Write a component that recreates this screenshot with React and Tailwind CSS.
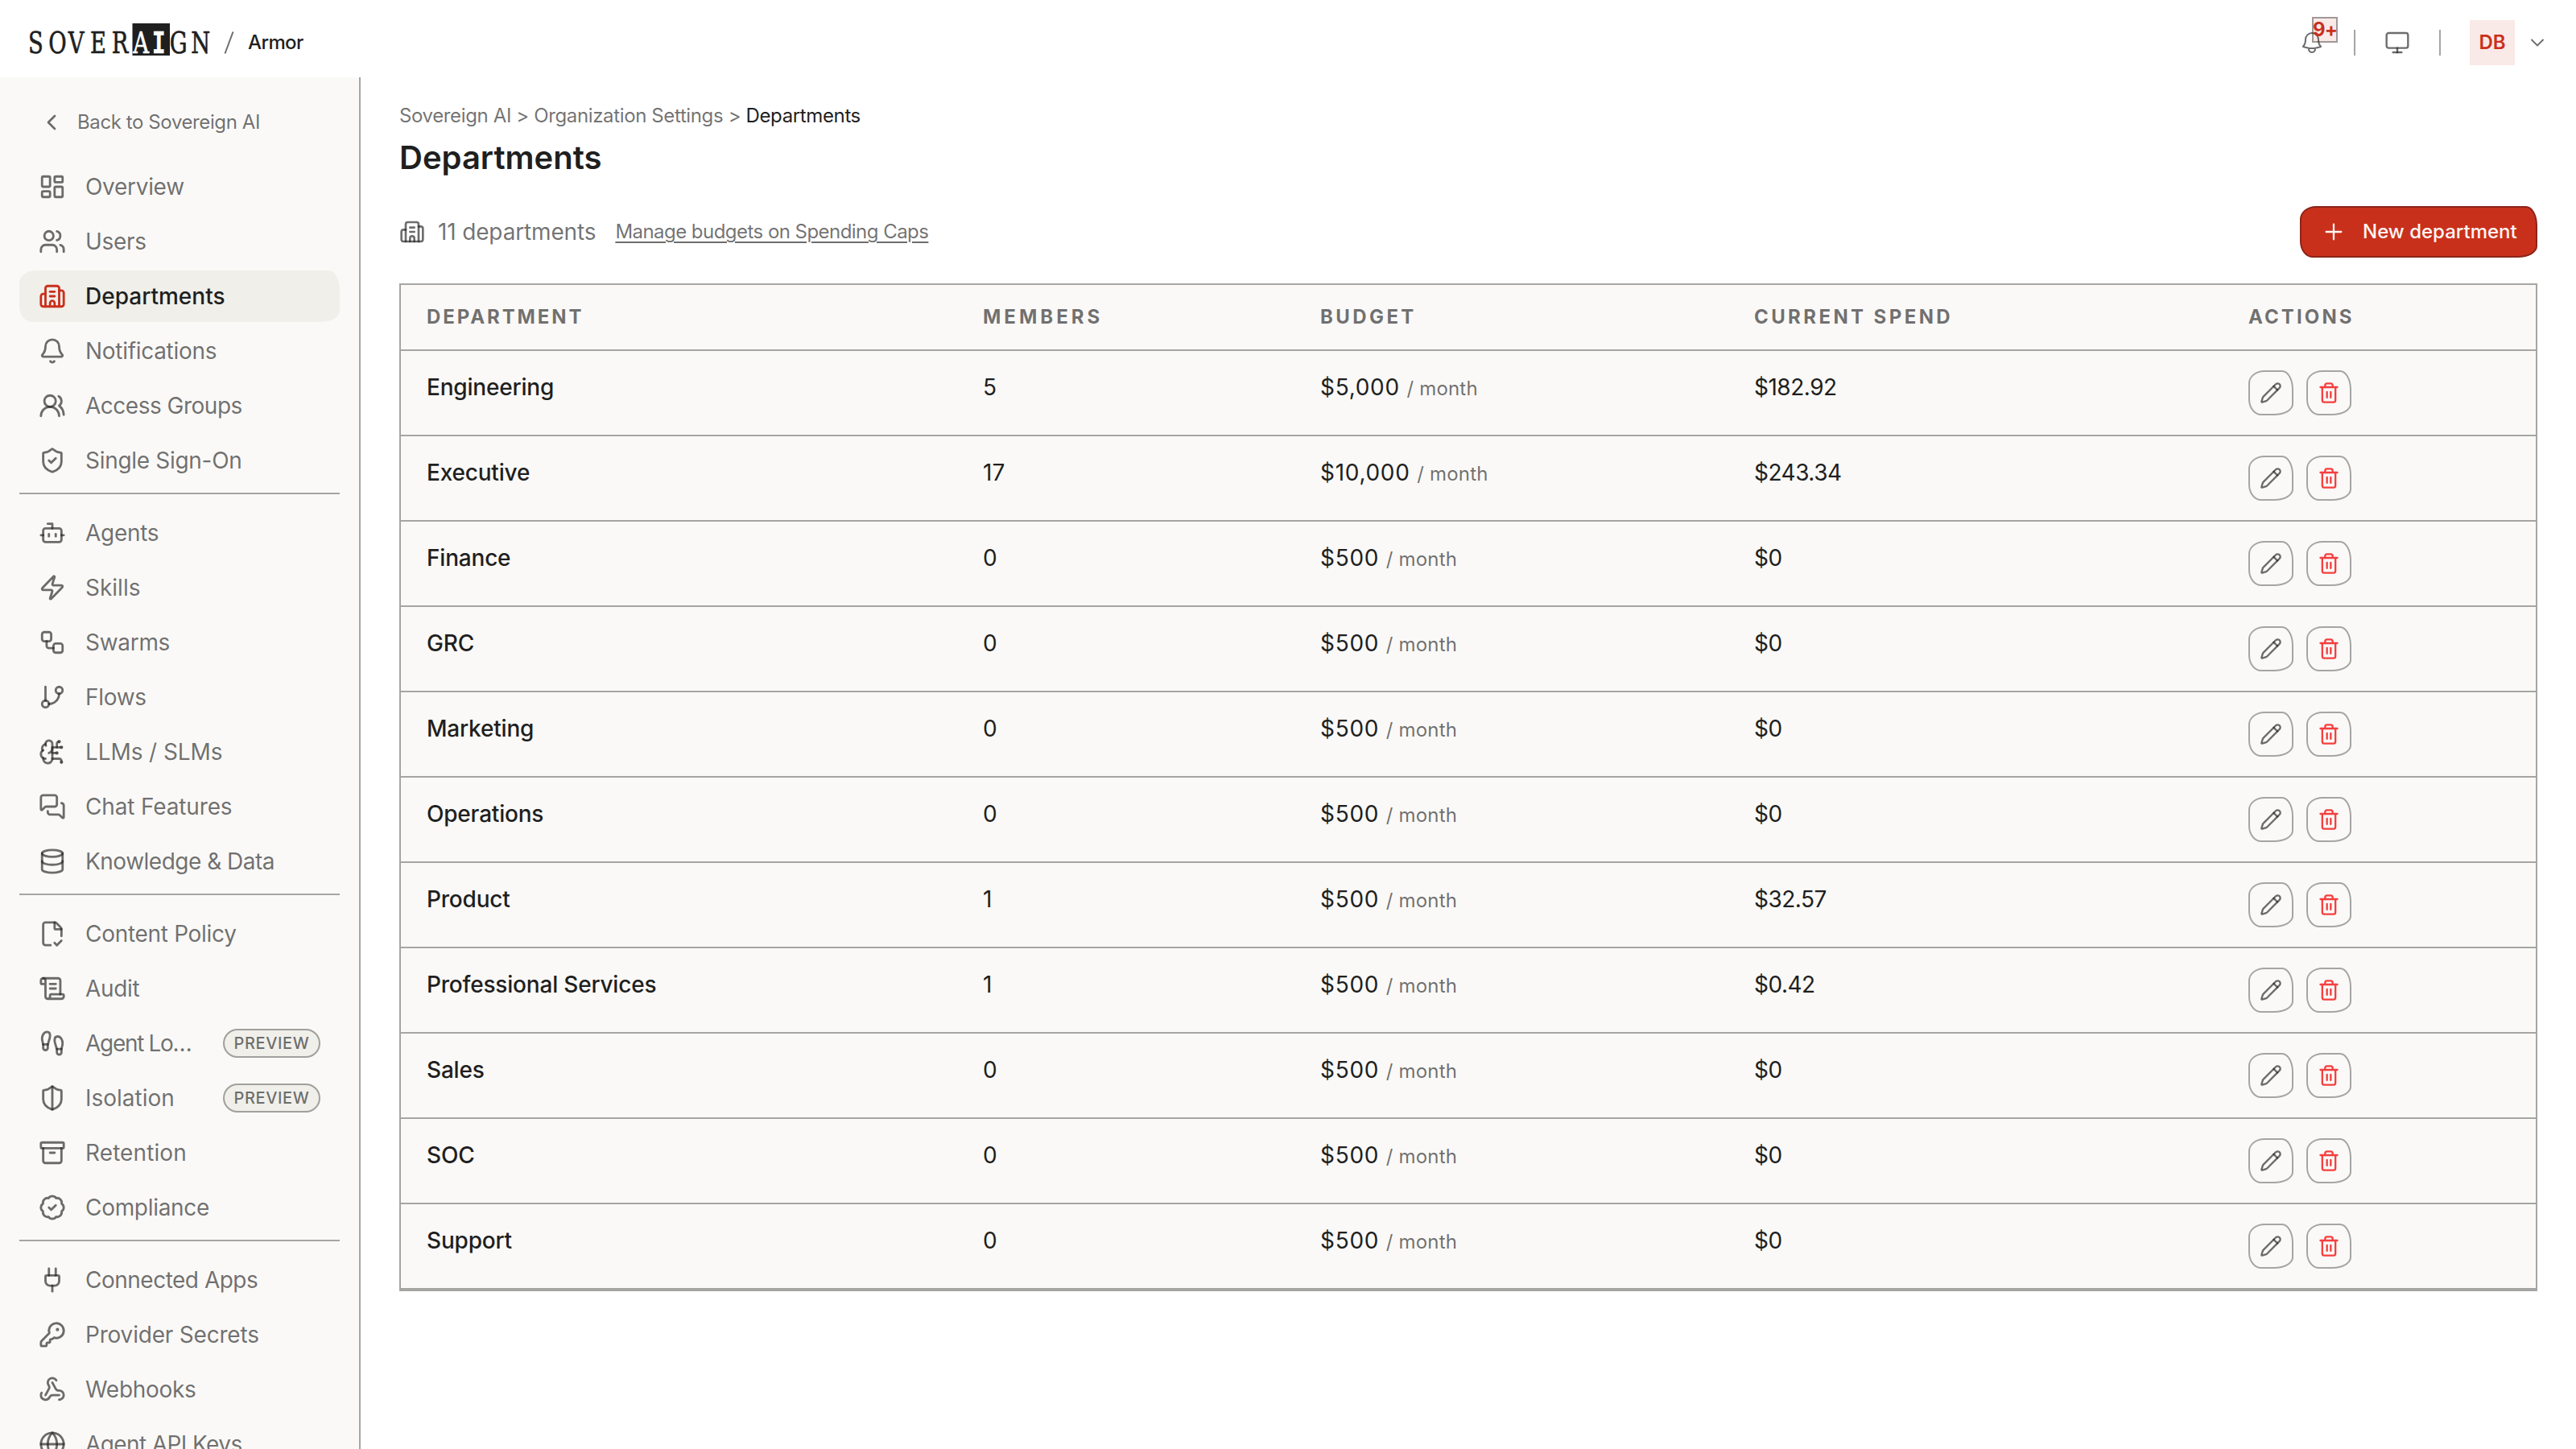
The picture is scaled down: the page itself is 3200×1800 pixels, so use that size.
import {
  Archive,
  BadgeCheck,
  Bell,
  Bot,
  BrainCircuit,
  Building2,
  ChevronDown,
  ChevronLeft,
  Database,
  FileCheck2,
  Footprints,
  GitBranch,
  Globe,
  KeyRound,
  LayoutDashboard,
  MessagesSquare,
  Monitor,
  Pencil,
  Plug,
  Plus,
  ScrollText,
  ShieldCheck,
  ShieldHalf,
  Trash2,
  Users,
  UsersRound,
  Webhook,
  Workflow,
  Zap,
} from 'lucide-react';
import { HiOutlineBell } from 'react-icons/hi2';

const navGroups = [
  [
    { label: 'Overview', icon: LayoutDashboard },
    { label: 'Users', icon: Users },
    { label: 'Departments', icon: Building2, active: true },
    { label: 'Notifications', icon: Bell },
    { label: 'Access Groups', icon: UsersRound, tracking: 'tracking-[-0.5px]' },
    { label: 'Single Sign-On', icon: ShieldCheck },
  ],
  [
    { label: 'Agents', icon: Bot },
    { label: 'Skills', icon: Zap, tracking: 'tracking-normal' },
    { label: 'Swarms', icon: Workflow },
    { label: 'Flows', icon: GitBranch },
    { label: 'LLMs / SLMs', icon: BrainCircuit, tracking: 'tracking-[-0.1px]' },
    { label: 'Chat Features', icon: MessagesSquare, tracking: 'tracking-[-0.15px]' },
    { label: 'Knowledge & Data', icon: Database, tracking: 'tracking-[-0.5px]' },
  ],
  [
    { label: 'Content Policy', icon: FileCheck2 },
    { label: 'Audit', icon: ScrollText },
    { label: 'Agent Lo…', icon: Footprints, preview: true, tracking: 'tracking-[-1.3px]' },
    { label: 'Isolation', icon: ShieldHalf, preview: true, tracking: 'tracking-normal' },
    { label: 'Retention', icon: Archive, tracking: 'tracking-[0.1px]' },
    { label: 'Compliance', icon: BadgeCheck },
  ],
  [
    { label: 'Connected Apps', icon: Plug, tracking: 'tracking-[-0.5px]' },
    { label: 'Provider Secrets', icon: KeyRound, tracking: 'tracking-[-0.2px]' },
    { label: 'Webhooks', icon: Webhook },
    { label: 'Agent API Keys', icon: Globe, tracking: 'tracking-[-0.6px]' },
  ],
];

const departments = [
  { name: 'Engineering', members: 5, budget: '$5,000', spend: '$182.92' },
  { name: 'Executive', members: 17, budget: '$10,000', spend: '$243.34' },
  { name: 'Finance', members: 0, budget: '$500', spend: '$0' },
  { name: 'GRC', members: 0, budget: '$500', spend: '$0' },
  { name: 'Marketing', members: 0, budget: '$500', spend: '$0' },
  { name: 'Operations', members: 0, budget: '$500', spend: '$0' },
  { name: 'Product', members: 1, budget: '$500', spend: '$32.57' },
  { name: 'Professional Services', members: 1, budget: '$500', spend: '$0.42' },
  { name: 'Sales', members: 0, budget: '$500', spend: '$0' },
  { name: 'SOC', members: 0, budget: '$500', spend: '$0' },
  { name: 'Support', members: 0, budget: '$500', spend: '$0' },
];

const columns = 'grid grid-cols-[691px_419px_539px_614px_1fr] pl-8';

// Slightly uneven corners, shared by buttons and the active nav item
const sketchy = 'rounded-[20px_14px_24px_16px/16px_24px_14px_20px]';

const Logo = () => (
  <svg width="228" height="44" viewBox="0 0 228 44" className="overflow-visible" aria-label="SOVERAIGN">
    <rect x="129.5" y="2" width="46.5" height="40" fill="#1f1f1f" />
    <text
      transform="scale(0.72 1)"
      y="39"
      x="0 35 69 107 144 181 214 244 281"
      fontFamily="'DejaVu Serif', serif"
      fontSize="38"
      fill="#1f1f1f"
      stroke="#1f1f1f"
      strokeWidth="0.7"
    >
      SOVER
      <tspan fill="#ffffff" stroke="#ffffff">A</tspan>
      <tspan fill="#ffffff" stroke="#ffffff" fontFamily="'DejaVu Sans Mono', monospace" fontWeight="700">I</tspan>
      GN
    </text>
  </svg>
);

const Header = () => (
  <header className="flex h-24 shrink-0 items-center justify-between bg-white pt-2.5 pr-[34px] pl-[35px]">
    <div className="flex items-center">
      <div className="-mt-2"><Logo /></div>
      <svg width="14" height="30" viewBox="0 0 14 30" className="ml-[15px]">
        <path d="M1.5 28.5 11.5 1.5" stroke="#1f1f1fa6" strokeWidth="2" />
      </svg>
      <span className="ml-4 text-[24px] font-medium tracking-[-0.6px] text-[#1f1f1f]">Armor</span>
    </div>

    <div className="flex items-center">
      <div className="relative text-[#1f1f1fa6]">
        <HiOutlineBell className="size-8" />
        <span className="absolute -top-4 left-4 flex size-8 items-center justify-center border-2 border-[#1f1f1f66] bg-[#c9301c1a] text-[24px] font-bold tracking-[-1px] text-[#c9301c]">
          9+
        </span>
      </div>
      <div className="ml-9 h-8 w-0.5 bg-[#a5a5a3]" />
      <Monitor className="ml-9 size-8 text-[#1f1f1fa6]" strokeWidth={1.8} />
      <div className="ml-9 h-8 w-0.5 bg-[#a5a5a3]" />
      <div className="ml-9 flex size-14 items-center justify-center bg-[#f9e9e7] text-[24px] font-semibold text-[#c9301c]">
        DB
      </div>
      <ChevronDown className="ml-3.5 size-7 text-[#1f1f1fa6]" strokeWidth={1.6} />
    </div>
  </header>
);

const NavItem = ({ label, icon: Icon, active, preview, tracking = 'tracking-[-0.3px]' }) => (
  <div
    className={`flex h-16 shrink-0 items-center px-6 ${sketchy} ${
      active ? 'bg-[#f0efea] font-medium text-[#1f1f1f]' : 'text-[#1f1f1fa6]'
    }`}
  >
    <Icon className={`size-[34px] shrink-0 ${active ? 'text-[#c9301c]' : ''}`} />
    <span className={`ml-6 text-[28px] leading-[42px] whitespace-nowrap ${active ? '' : tracking}`}>
      {label}
    </span>
    {preview && (
      <span className="ml-auto flex h-9 w-[121px] items-center justify-center rounded-full border-2 border-[#a0a09c] bg-[#f0efea] text-[20px] font-medium tracking-[0.6px]">
        PREVIEW
      </span>
    )}
  </div>
);

const Sidebar = () => (
  <aside className="flex w-[448px] shrink-0 flex-col overflow-hidden border-r-2 border-[#a5a5a3] bg-[#faf9f7] px-6 pt-6">
    <div className="mb-4 flex h-16 shrink-0 items-center gap-4 pl-6 text-[24px] tracking-[-0.4px] text-[#1f1f1fa6]">
      <ChevronLeft className="size-8" />
      Back to Sovereign AI
    </div>
    {navGroups.map((group, i) => (
      <div
        key={i}
        className={`flex shrink-0 flex-col gap-1 ${i > 0 ? 'mt-2 border-t-2 border-[#a5a5a3] pt-4' : ''}`}
      >
        {group.map((item) => <NavItem key={item.label} {...item} />)}
      </div>
    ))}
  </aside>
);

const ActionButton = ({ icon: Icon, className }) => (
  <button className={`flex size-14 items-center justify-center border-2 border-[#a5a5a3] ${sketchy} ${className}`}>
    <Icon className="size-7" />
  </button>
);

const DepartmentsTable = () => (
  <div className="mt-8 border-2 border-[#a5a5a3] bg-[#faf9f7]">
    <div className={`${columns} h-[82px] items-center border-b-2 border-[#a5a5a3] text-[24px] font-bold tracking-[3.4px] text-[#1f1f1fa6]`}>
      <span className="tracking-[2.9px]">DEPARTMENT</span>
      <span className="tracking-[4px]">MEMBERS</span>
      <span>BUDGET</span>
      <span>CURRENT SPEND</span>
      <span className="tracking-[3.1px]">ACTIONS</span>
    </div>
    {departments.map((d) => (
      <div key={d.name} className={`${columns} h-[106px] border-b-2 border-[#a5a5a3] pt-6 text-[28px] leading-[42px] text-[#1f1f1f]`}>
        <span className="font-medium tracking-[-0.2px]">{d.name}</span>
        <span>{d.members}</span>
        <span className="tracking-[0.7px]">
          {d.budget} <span className="text-[24px] tracking-[0.2px] text-[#1f1f1fa6]">/ month</span>
        </span>
        <span className="tracking-[-0.5px]">{d.spend}</span>
        <span className="flex gap-4">
          <ActionButton icon={Pencil} className="text-[#1f1f1fa6]" />
          <ActionButton icon={Trash2} className="text-[#f43f3f]" />
        </span>
      </div>
    ))}
  </div>
);

const App = () => (
  <div className="flex h-[1800px] w-[3200px] flex-col overflow-hidden bg-white font-['Inter',sans-serif]">
    <Header />
    <div className="flex min-h-0 flex-1">
      <Sidebar />
      <main className="flex-1 px-12 pt-[30px]">
        <div className="text-[24px] leading-9 tracking-[-0.37px] text-[#1f1f1fa6]">
          Sovereign AI &gt; Organization Settings &gt; <span className="text-[#1f1f1f]">Departments</span>
        </div>
        <h1 className="mt-[9px] text-[40px] leading-[50px] font-semibold text-[#1f1f1f]">Departments</h1>
        <div className="mt-[35px] flex items-center justify-between">
          <div className="flex items-center text-[#1f1f1fa6]">
            <Building2 className="size-8" />
            <span className="ml-4 text-[28px] tracking-[-0.15px]">11 departments</span>
            <span className="ml-6 text-[24px] tracking-[-0.54px] underline decoration-2 underline-offset-4">
              Manage budgets on Spending Caps
            </span>
          </div>
          <button className={`flex h-16 w-[295px] items-center border-2 border-[#8a2518] bg-[#c9301c] pl-6 text-[24px] font-medium whitespace-nowrap text-[#fdf6f4] ${sketchy}`}>
            <Plus className="mr-5 size-8" strokeWidth={1.7} />
            New department
          </button>
        </div>
        <DepartmentsTable />
      </main>
    </div>
  </div>
);

export default App;
